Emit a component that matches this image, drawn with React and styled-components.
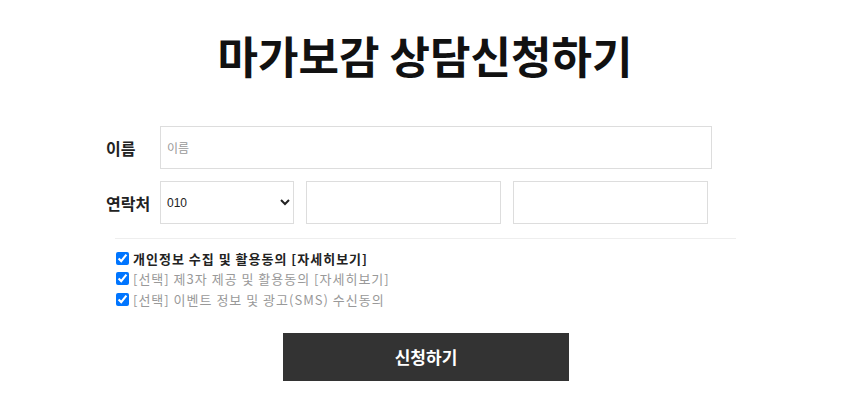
import styled, { createGlobalStyle } from "styled-components";

const Global = createGlobalStyle`
  body {
    margin: 0;
    background: #fff;
    font-family: "Noto Sans CJK KR", "Noto Sans", sans-serif;
  }
`;

const Page = styled.div`
  width: 850px;
  padding-top: 29px;
`;

const Title = styled.h1`
  margin: 0;
  text-align: center;
  font-size: 44px;
  line-height: 53px;
  font-weight: 700;
  color: #111;
`;

const Form = styled.form`
  width: 630px;
  margin: 44px 0 0 106px;
`;

const Row = styled.div`
  display: flex;
  align-items: center;
  margin-bottom: ${(p) => p.gap ?? 12}px;
`;

const Label = styled.label`
  width: 54px;
  flex: none;
  font-size: 16px;
  font-weight: 700;
  color: #222;
`;

const Input = styled.input`
  box-sizing: border-box;
  width: ${(p) => p.w}px;
  height: 43px;
  border: 1px solid #ddd;
  padding: 0 6px;
  margin-right: ${(p) => p.mr || 0}px;
  font-family: inherit;
  font-size: 12px;
  color: #333;
  outline: none;
  &::placeholder {
    color: #999;
  }
`;

const Select = styled.select`
  box-sizing: border-box;
  width: 134px;
  height: 43px;
  border: 1px solid #ddd;
  padding: 0 2px;
  margin-right: 12px;
  background: #fff;
  font-family: "Liberation Sans", sans-serif;
  font-size: 12px;
  color: #222;
  outline: none;
`;

const Divider = styled.hr`
  margin: 14px 0 0 9px;
  border: 0;
  border-top: 1px solid #eee;
`;

const Agree = styled.div`
  display: flex;
  flex-direction: column;
  margin: 9px 0 0 8px;
`;

const Check = styled.label`
  display: flex;
  align-items: center;
  height: 20.5px;
  font-size: 13px;
  letter-spacing: 1px;
  font-weight: ${(p) => (p.main ? 700 : 400)};
  color: ${(p) => (p.main ? "#222" : "#999")};
  input {
    margin: 0 4px 0 2px;
    width: 13px;
    height: 13px;
  }
`;

const Submit = styled.button`
  display: block;
  width: 286px;
  height: 48px;
  margin: 23px 0 0 177px;
  border: 0;
  background: #333;
  color: #fff;
  font-family: inherit;
  font-size: 17px;
  font-weight: 700;
`;

export default function App() {
  return (
    <Page>
      <Global />
      <Title>마가보감 상담신청하기</Title>
      <Form onSubmit={(e) => e.preventDefault()}>
        <Row>
          <Label>이름</Label>
          <Input w={552} placeholder="이름" />
        </Row>
        <Row gap={0}>
          <Label>연락처</Label>
          <Select defaultValue="010">
            <option value="010">010</option>
            <option value="011">011</option>
            <option value="016">016</option>
          </Select>
          <Input w={195} mr={12} />
          <Input w={195} />
        </Row>
        <Divider />
        <Agree>
          <Check main>
            <input type="checkbox" defaultChecked />
            개인정보 수집 및 활용동의 [자세히보기]
          </Check>
          <Check>
            <input type="checkbox" defaultChecked />
            [선택] 제3자 제공 및 활용동의 [자세히보기]
          </Check>
          <Check>
            <input type="checkbox" defaultChecked />
            [선택] 이벤트 정보 및 광고(SMS) 수신동의
          </Check>
        </Agree>
        <Submit type="submit">신청하기</Submit>
      </Form>
    </Page>
  );
}
